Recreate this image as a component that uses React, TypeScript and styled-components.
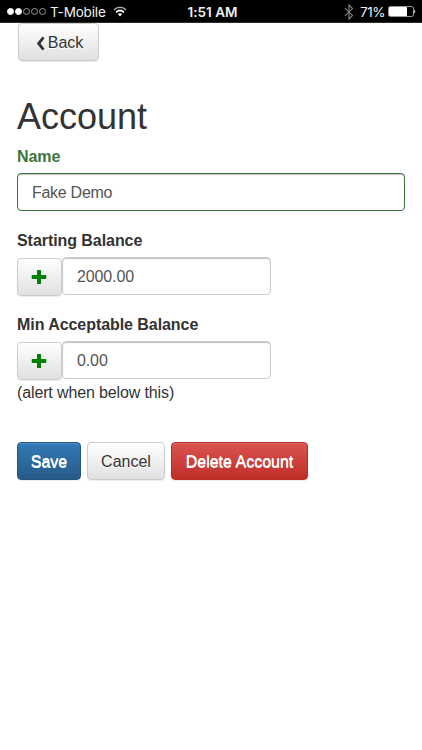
import React from "react";
import styled, { createGlobalStyle, css } from "styled-components";

const GlobalStyle = createGlobalStyle`
  * { box-sizing: border-box; }
  body {
    margin: 0;
    background: #fff;
    color: #333;
    font: 16px/22px "Liberation Sans", Arial, sans-serif;
  }
`;

const Screen = styled.div`
  width: 422px;
  height: 750px;
  overflow: hidden;
  background: #fff;
`;

const StatusBar = styled.header`
  display: grid;
  grid-template-columns: 1fr auto 1fr;
  align-items: center;
  height: 23px;
  padding: 1px 6px 0 7px;
  border-bottom: 1px solid #2b2b2b;
  background: #000;
  color: #f2f2f2;
  font: 14px/20px Inter, "Liberation Sans", sans-serif;
`;

const StatusGroup = styled.div<{ $end?: boolean }>`
  display: flex;
  align-items: center;
  justify-content: ${(p) => (p.$end ? "flex-end" : "flex-start")};
`;

const Signal = styled.div`
  display: flex;
  gap: 1px;
  margin-right: 4px;
`;

const Dot = styled.i<{ $filled?: boolean }>`
  width: 7px;
  height: 7px;
  border: 1px solid ${(p) => (p.$filled ? "#fff" : "#999")};
  border-radius: 50%;
  background: ${(p) => (p.$filled ? "#fff" : "transparent")};
`;

const Carrier = styled.span`
  margin-right: 7px;
  font-size: 13.5px;
  letter-spacing: -0.15px;
`;

const Clock = styled.span`
  font-size: 13.5px;
  font-weight: 600;
  letter-spacing: 0.05px;
  margin-left: 2px;
`;

const Percent = styled.span`
  margin: 0 3px 0 6px;
  font-size: 13.5px;
  letter-spacing: -0.5px;
`;

const Page = styled.main`
  padding: 0 17px;
`;

const tones = {
  plain: css`
    border-color: #ccc;
    background: linear-gradient(#fff, #e0e0e0);
    color: #333;
    text-shadow: 0 1px 0 #fff;
  `,
  primary: css`
    border-color: #245580;
    background: linear-gradient(#337ab7, #265a88);
    color: #fff;
    text-shadow: 0 1px 0 #fff;
  `,
  danger: css`
    border-color: #b92c28;
    background: linear-gradient(#d9534f, #c12e2a);
    color: #fff;
    text-shadow: 0 1px 0 #fff;
  `,
};

const Button = styled.button<{ $tone?: keyof typeof tones; $width: number }>`
  display: flex;
  align-items: center;
  justify-content: center;
  flex: none;
  width: ${(p) => p.$width}px;
  height: 38px;
  padding: 1px 0 0;
  border: 1px solid;
  border-radius: 4px;
  font: inherit;
  white-space: nowrap;
  box-shadow: inset 0 1px 0 rgba(255, 255, 255, 0.15), 0 1px 1px rgba(0, 0, 0, 0.075);
  ${(p) => tones[p.$tone ?? "plain"]}
`;

const BackButton = styled(Button)`
  margin-left: 1px;
  gap: 3px;
  padding: 1px 0 0 2px;
`;

const Chevron = styled.svg`
  margin-top: 2px;
`;

const Title = styled.h1`
  margin: 36px 0 9px;
  font-size: 36px;
  font-weight: 400;
  line-height: 40px;
`;

const Field = styled.section<{ $gap: number }>`
  margin-bottom: ${(p) => p.$gap}px;
`;

const Label = styled.label<{ $valid?: boolean }>`
  display: block;
  margin-bottom: 5px;
  line-height: 22px;
  font-weight: 700;
  letter-spacing: -0.06px;
  color: ${(p) => (p.$valid ? "#3c763d" : "#333")};
`;

const Input = styled.input<{ $valid?: boolean }>`
  display: block;
  width: ${(p) => (p.$valid ? "388px" : "209px")};
  height: 38px;
  padding: 2px 14px 0;
  border: 1px solid ${(p) => (p.$valid ? "#3c763d" : "#ccc")};
  border-radius: 4px;
  background: #fff;
  color: #555;
  font: inherit;
  letter-spacing: ${(p) => (p.$valid ? "-0.28px" : "-0.12px")};
  outline: none;
  box-shadow: inset 0 1px 1px rgba(0, 0, 0, 0.25);
`;

const Amount = styled.div`
  display: flex;
  align-items: flex-start;
`;

const SignButton = styled(Button)`
  margin-top: 1px;
  padding: 0 2px 0 0;
`;

const Hint = styled.p`
  margin: 1px 0 0;
  line-height: 23px;
  letter-spacing: -0.13px;
`;

const Actions = styled.div`
  display: flex;
  gap: 6px;
`;

const Plus = () => (
  <svg width="16" height="16" viewBox="0 0 16 16">
    <path
      d="M6.6 1h2.8q.6 0 .6.6V6h4.7q.6 0 .6.6v2.7q0 .6-.6.6H10v4.5q0 .6-.6.6H6.6q-.6 0-.6-.6V9.9H1.3q-.6 0-.6-.6V6.6Q.7 6 1.3 6H6V1.6Q6 1 6.6 1Z"
      fill="#008000"
    />
  </svg>
);

function AmountField({ label, value, gap, hint }: { label: string; value: string; gap: number; hint?: string }) {
  return (
    <Field $gap={gap}>
      <Label>{label}</Label>
      <Amount>
        <SignButton $width={45} aria-label="Positive">
          <Plus />
        </SignButton>
        <Input defaultValue={value} aria-label={label} />
      </Amount>
      {hint && <Hint>{hint}</Hint>}
    </Field>
  );
}

export default function App() {
  return (
    <Screen>
      <GlobalStyle />
      <StatusBar>
        <StatusGroup>
          <Signal>
            <Dot $filled />
            <Dot $filled />
            <Dot />
            <Dot />
            <Dot />
          </Signal>
          <Carrier>T-Mobile</Carrier>
          <svg width="14" height="11" viewBox="0 0 14 11" fill="none">
            <path d="M1 3.8Q7-1.3 13 3.8" stroke="#aaa" strokeWidth="1.6" />
            <path d="M3.1 6.2Q7 2.9 10.9 6.2" stroke="#fff" strokeWidth="1.8" />
            <path d="M4.9 8.1Q7 6.3 9.1 8.1L7 10.4Z" fill="#fff" />
          </svg>
        </StatusGroup>
        <Clock>1:51 AM</Clock>
        <StatusGroup $end>
          <svg width="10" height="16" viewBox="0 0 10 16" fill="none">
            <path d="M1 4.2 8.5 11.4 5 15V1l3.5 3.6L1 11.8" stroke="#858585" strokeWidth="1.1" />
          </svg>
          <Percent>71%</Percent>
          <svg width="28" height="12" viewBox="0 0 28 12">
            <rect x=".5" y=".5" width="25" height="10" rx="1.8" fill="none" stroke="#999" />
            <rect x="1" y="1" width="18" height="9" rx=".7" fill="#fff" />
            <path d="M26.2 3.4q2 2.1 0 4.2Z" fill="#fff" />
          </svg>
        </StatusGroup>
      </StatusBar>
      <Page>
        <BackButton $width={81}>
          <Chevron width="9" height="15" viewBox="0 0 9 15">
            <path d="M6.5.5 8.5 2.2 4.5 7.5l4 5.3-2 1.7L.8 7.5Z" fill="#333" />
          </Chevron>
          Back
        </BackButton>
        <Title>Account</Title>
        <Field $gap={19}>
          <Label $valid>Name</Label>
          <Input $valid defaultValue="Fake Demo" aria-label="Name" />
        </Field>
        <AmountField label="Starting Balance" value="2000.00" gap={18} />
        <AmountField label="Min Acceptable Balance" value="0.00" gap={38} hint="(alert when below this)" />
        <Actions>
          <Button $tone="primary" $width={64}>Save</Button>
          <Button $width={78}>Cancel</Button>
          <Button $tone="danger" $width={137}>Delete Account</Button>
        </Actions>
      </Page>
    </Screen>
  );
}
